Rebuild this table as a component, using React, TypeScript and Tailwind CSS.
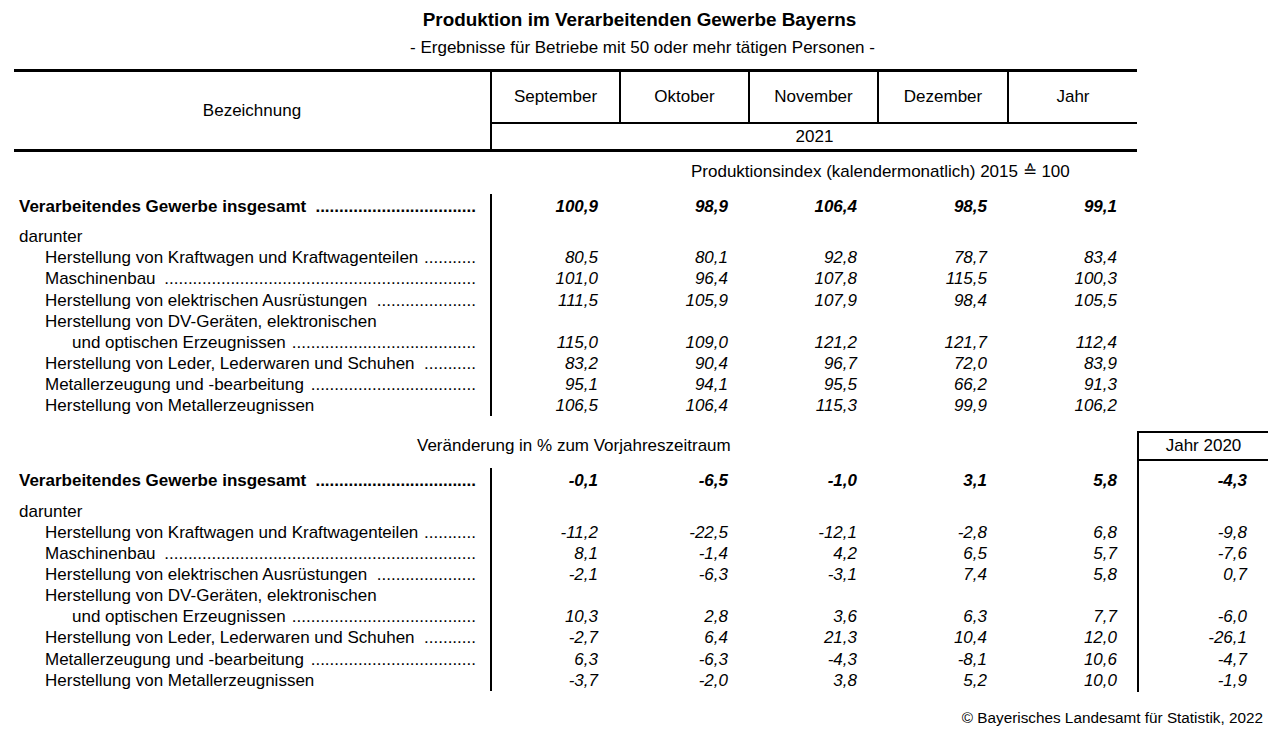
import React from "react";

type Row = { label: string; kind: "bold" | "head" | "sub" | "cont"; dots?: number; v?: string[]; j?: string };

const sec1: Row[] = [
  { label: "Verarbeitendes Gewerbe insgesamt", kind: "bold", dots: 34, v: ["100,9", "98,9", "106,4", "98,5", "99,1"] },
  { label: "darunter", kind: "head" },
  { label: "Herstellung von Kraftwagen und Kraftwagenteilen", kind: "sub", dots: 11, v: ["80,5", "80,1", "92,8", "78,7", "83,4"] },
  { label: "Maschinenbau", kind: "sub", dots: 66, v: ["101,0", "96,4", "107,8", "115,5", "100,3"] },
  { label: "Herstellung von elektrischen Ausrüstungen", kind: "sub", dots: 21, v: ["111,5", "105,9", "107,9", "98,4", "105,5"] },
  { label: "Herstellung von DV-Geräten, elektronischen", kind: "sub" },
  { label: "und optischen Erzeugnissen", kind: "cont", dots: 39, v: ["115,0", "109,0", "121,2", "121,7", "112,4"] },
  { label: "Herstellung von Leder, Lederwaren und Schuhen", kind: "sub", dots: 11, v: ["83,2", "90,4", "96,7", "72,0", "83,9"] },
  { label: "Metallerzeugung und -bearbeitung", kind: "sub", dots: 35, v: ["95,1", "94,1", "95,5", "66,2", "91,3"] },
  { label: "Herstellung von Metallerzeugnissen", kind: "sub", v: ["106,5", "106,4", "115,3", "99,9", "106,2"] },
];

const sec2: Row[] = [
  { label: "Verarbeitendes Gewerbe insgesamt", kind: "bold", dots: 34, v: ["-0,1", "-6,5", "-1,0", "3,1", "5,8"], j: "-4,3" },
  { label: "darunter", kind: "head" },
  { label: "Herstellung von Kraftwagen und Kraftwagenteilen", kind: "sub", dots: 11, v: ["-11,2", "-22,5", "-12,1", "-2,8", "6,8"], j: "-9,8" },
  { label: "Maschinenbau", kind: "sub", dots: 66, v: ["8,1", "-1,4", "4,2", "6,5", "5,7"], j: "-7,6" },
  { label: "Herstellung von elektrischen Ausrüstungen", kind: "sub", dots: 21, v: ["-2,1", "-6,3", "-3,1", "7,4", "5,8"], j: "0,7" },
  { label: "Herstellung von DV-Geräten, elektronischen", kind: "sub" },
  { label: "und optischen Erzeugnissen", kind: "cont", dots: 39, v: ["10,3", "2,8", "3,6", "6,3", "7,7"], j: "-6,0" },
  { label: "Herstellung von Leder, Lederwaren und Schuhen", kind: "sub", dots: 11, v: ["-2,7", "6,4", "21,3", "10,4", "12,0"], j: "-26,1" },
  { label: "Metallerzeugung und -bearbeitung", kind: "sub", dots: 35, v: ["6,3", "-6,3", "-4,3", "-8,1", "10,6"], j: "-4,7" },
  { label: "Herstellung von Metallerzeugnissen", kind: "sub", v: ["-3,7", "-2,0", "3,8", "5,2", "10,0"], j: "-1,9" },
];

const colW = ["w-[127px]", "w-[129px]", "w-[129px]", "w-[130px]", "w-[130px]"];
const colPr = ["pr-[21px]", "pr-[20px]", "pr-[20px]", "pr-[20px]", "pr-[20px]"];

function rowWrap(r: Row, i: number, content: React.ReactNode) {
  const extra = r.kind === "head" ? "mt-[9px]" : "";
  return (
    <div key={i} className={`h-[21.15px] leading-[21px] ${extra}`}>
      {content}
    </div>
  );
}

function Labels({ rows }: { rows: Row[] }) {
  return (
    <div className="w-[476px] pt-[2px] pr-[14px]">
      {rows.map((r, i) => {
        const pl = r.kind === "sub" ? "pl-[31px]" : r.kind === "cont" ? "pl-[58px]" : "pl-[5px]";
        const fw = r.kind === "bold" ? "font-bold" : "";
        return rowWrap(
          r,
          i,
          <div className={`flex whitespace-nowrap ${pl} ${fw}`}>
            <span>{r.label}</span>
            {r.dots ? (
              <span className="ml-auto min-w-0 overflow-hidden">{".".repeat(r.dots)}</span>
            ) : null}
          </div>
        );
      })}
    </div>
  );
}

function Values({ rows }: { rows: Row[] }) {
  return (
    <div className="flex border-l-2 border-black pt-[2px]">
      {colW.map((w, c) => (
        <div key={c} className={w}>
          {rows.map((r, i) =>
            rowWrap(
              r,
              i,
              <div className={`text-right italic ${colPr[c]} ${r.kind === "bold" ? "font-bold" : ""}`}>
                {r.v ? r.v[c] : "\u00a0"}
              </div>
            )
          )}
        </div>
      ))}
    </div>
  );
}

function JahrCol({ rows }: { rows: Row[] }) {
  return (
    <div className="pt-[2px]">
      {rows.map((r, i) =>
        rowWrap(
          r,
          i,
          <div className={`text-right italic pr-[21px] ${r.kind === "bold" ? "font-bold" : ""}`}>{r.j ?? "\u00a0"}</div>
        )
      )}
    </div>
  );
}

export default function App() {
  return (
    <div
      className="w-[1285px] h-[739px] bg-white text-black text-[17px]"
      style={{ fontFamily: '"Liberation Sans", Arial, sans-serif' }}
    >
      <div className="pt-[8px] h-[32px] leading-[24px] text-center text-[18.9px] font-bold pr-[6px]">
        Produktion im Verarbeitenden Gewerbe Bayerns
      </div>
      <div className="h-[22px] leading-[22px] mt-[5px] text-center text-[17px]">
        - Ergebnisse für Betriebe mit 50 oder mehr tätigen Personen -
      </div>

      <div className="ml-[14px] mt-[10px] w-[1123px]">
        {/* header */}
        <div className="flex border-t-[3px] border-b-[3px] border-black">
          <div className="w-[476px] flex items-center justify-center">Bezeichnung</div>
          <div className="w-[647px] border-l-2 border-black">
            <div className="flex h-[52px] border-b-2 border-black">
              {["September", "Oktober", "November", "Dezember", "Jahr"].map((m, i) => (
                <div
                  key={m}
                  className={`${colW[i]} ${i > 0 ? "border-l-2 border-black" : ""} flex items-start justify-center pt-[14px] leading-[21px]`}
                >
                  {m}
                </div>
              ))}
            </div>
            <div className="h-[25px] leading-[25px] text-center">2021</div>
          </div>
        </div>

        {/* section 1 */}
        <div className="h-[42px] pt-[9px] leading-[21px] pl-[677px] whitespace-nowrap">
          Produktionsindex (kalendermonatlich) 2015 ≙ 100
        </div>
        <div className="flex">
          <Labels rows={sec1} />
          <Values rows={sec1} />
        </div>
      </div>

      {/* section 2 */}
      <div className="ml-[14px] mt-[15px] flex">
        <div className="w-[1123px]">
          <div className="h-[30px] pt-[4px] leading-[21px] pl-[403px]">Veränderung in % zum Vorjahreszeitraum</div>
          <div className="flex mt-[7px] pb-[1px]">
            <Labels rows={sec2} />
            <Values rows={sec2} />
          </div>
        </div>
        <div className="w-[131px] border-l-2 border-black">
          <div className="h-[30px] border-t-2 border-b-2 border-black text-center leading-[26px]">Jahr 2020</div>
          <div className="mt-[7px]">
            <JahrCol rows={sec2} />
          </div>
        </div>
      </div>

      <div className="mt-[15px] pr-[22px] text-right text-[15.3px] leading-[21px]">
        © Bayerisches Landesamt für Statistik, 2022
      </div>
    </div>
  );
}
